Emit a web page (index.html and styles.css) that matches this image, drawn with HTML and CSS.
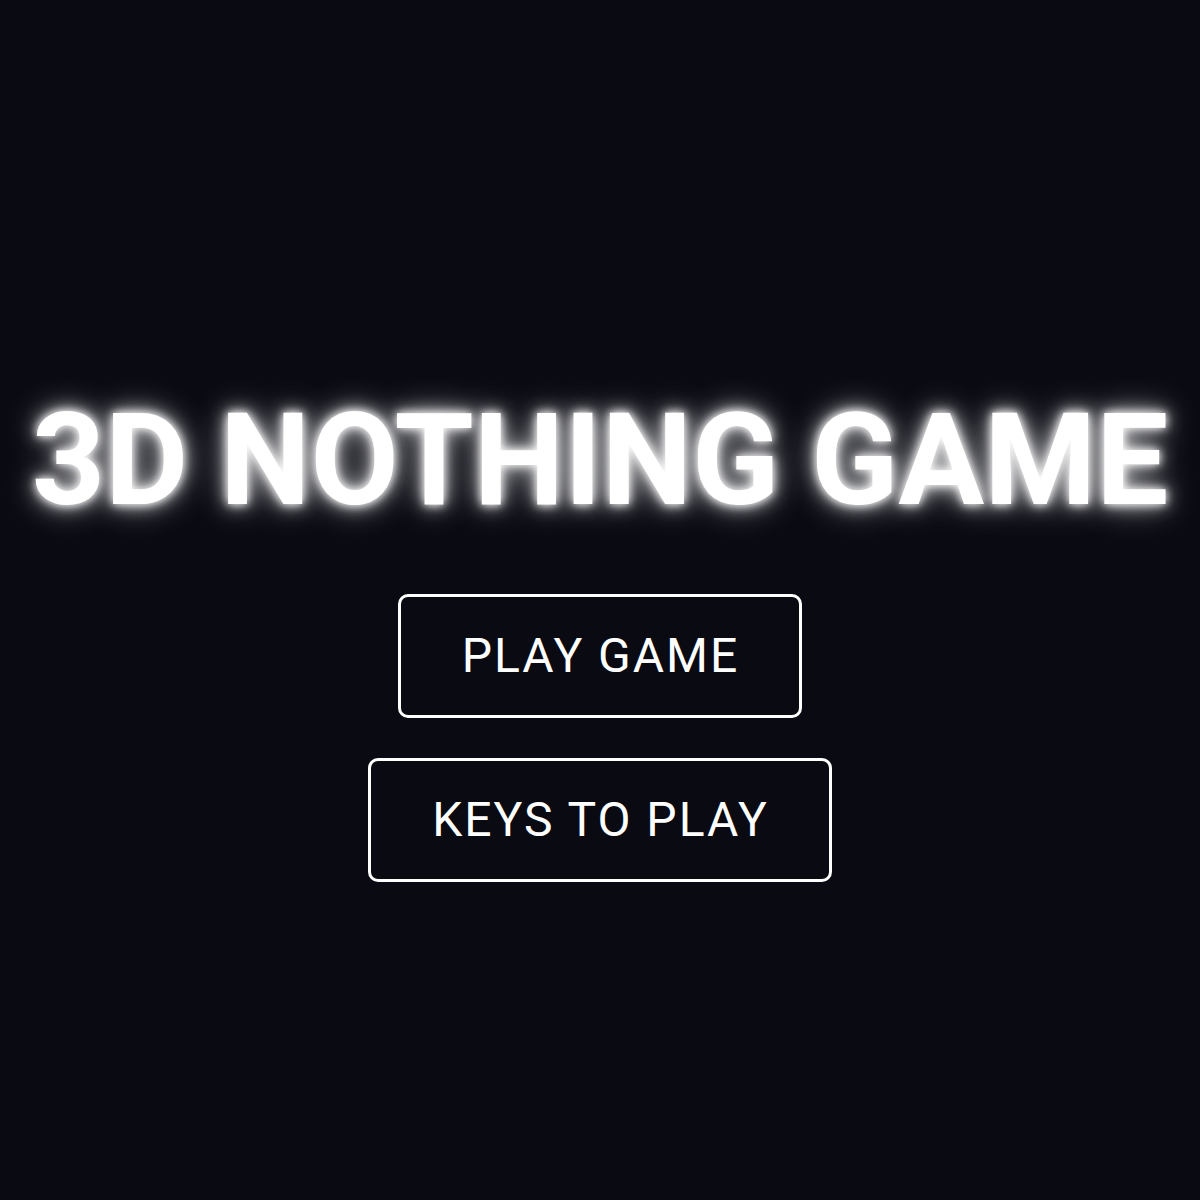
FILE: index.html
```html
<!DOCTYPE html>
<html>
<head>
<meta charset="utf-8">
<link rel="stylesheet" href="styles.css">
</head>
<body>
<main class="menu">
  <h1 class="title">3D NOTHING GAME</h1>
  <div class="buttons">
    <button class="btn">PLAY GAME</button>
    <button class="btn">KEYS TO PLAY</button>
  </div>
</main>
</body>
</html>
```

FILE: styles.css
```css
html, body {
  margin: 0;
  padding: 0;
  height: 100%;
}
body {
  background: #090a12;
  font-family: Roboto, "Liberation Sans", sans-serif;
  color: #fff;
}
.menu {
  box-sizing: border-box;
  height: 100%;
  padding-top: 78px;
  display: flex;
  flex-direction: column;
  align-items: center;
  justify-content: center;
}
.title {
  margin: 0;
  font-size: 128px;
  font-weight: 700;
  line-height: 1;
  color: #fff;
  white-space: nowrap;
  text-shadow: 0 0 8px #fff, 0 0 18px rgba(255,255,255,0.85), 0 0 34px rgba(255,255,255,0.6);
}
.buttons {
  margin-top: 70px;
  display: flex;
  flex-direction: column;
  align-items: center;
  gap: 40px;
}
.btn {
  background: transparent;
  color: #fff;
  font-family: Roboto, "Liberation Sans", sans-serif;
  font-size: 48px;
  font-weight: 400;
  letter-spacing: 2px;
  line-height: 56px;
  padding: 31px 60px 31px 61px;
  border: 3px solid #fff;
  border-radius: 10px;
}
```
